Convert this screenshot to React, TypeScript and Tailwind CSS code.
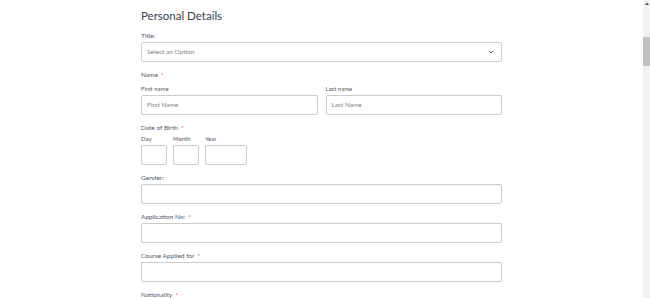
import React from 'react';

function Req() {
  return <span className="ml-[3px] text-[#e0473f]">*</span>;
}

function Label({ children, required }: { children: React.ReactNode; required?: boolean }) {
  return (
    <div className="mt-[8px] text-[6.5px] leading-[10px] text-[#525966]">
      {children}
      {required && <Req />}
    </div>
  );
}

function SubLabel({ children }: { children: React.ReactNode }) {
  return <div className="text-[6px] leading-[10px] text-[#525966]">{children}</div>;
}

function Box({ className = '', children }: { className?: string; children?: React.ReactNode }) {
  return (
    <div
      className={`flex h-[20px] items-center rounded-[2px] border border-[#cbcbcb] bg-white px-[5px] text-[6.5px] text-[#80838a] ${className}`}
    >
      {children}
    </div>
  );
}

// the browser's scrollbar, as it shows in the capture
function ScrollBar() {
  return (
    <div className="flex h-[298px] w-[7px] flex-col bg-[#f1f1f1]">
      <div className="flex h-[7px] items-center justify-center">
        <svg width="4" height="3" viewBox="0 0 4 3">
          <path d="M0 3 L2 0.5 L4 3 Z" fill="#505050" />
        </svg>
      </div>
      <div className="mt-[30px] h-[29px] bg-[#c1c1c1]" />
    </div>
  );
}

export default function App() {
  return (
    <div className="flex h-[298px] w-[650px] overflow-hidden bg-white font-['Lato',sans-serif]">
      <div className="flex-1 pl-[141px] pt-[8px]">
        <div className="w-[361px]">
          <h2 className="text-[11.5px] leading-[15px] text-[#38404e]">Personal Details</h2>

          <div className="mt-[2px]">
            <Label>Title:</Label>
            <Box className="mt-[1px] justify-between">
              <span>Select an Option</span>
              <svg width="6" height="4" viewBox="0 0 6 4" className="mr-[2px]">
                <path d="M0.8 0.8 L3 3 L5.2 0.8" fill="none" stroke="#555" strokeWidth="0.9" />
              </svg>
            </Box>
          </div>

          <Label required>Name</Label>
          <div className="mt-[4px] grid grid-cols-2 gap-[8px]">
            <div>
              <SubLabel>First name</SubLabel>
              <Box className="mt-[1px]">First Name</Box>
            </div>
            <div>
              <SubLabel>Last name</SubLabel>
              <Box className="mt-[1px]">Last Name</Box>
            </div>
          </div>

          <Label required>Date of Birth</Label>
          <div className="mt-[1px] flex gap-[6px]">
            <div className="w-[26px]">
              <SubLabel>Day</SubLabel>
              <Box className="mt-[1px]" />
            </div>
            <div className="w-[26px]">
              <SubLabel>Month</SubLabel>
              <Box className="mt-[1px]" />
            </div>
            <div className="w-[42px]">
              <SubLabel>Year</SubLabel>
              <Box className="mt-[1px]" />
            </div>
          </div>

          <Label>Gender:</Label>
          <Box className="mt-[1px]" />

          <Label required>Application No:</Label>
          <Box className="mt-[1px]" />

          <Label required>Course Applied for</Label>
          <Box className="mt-[1px]" />

          <Label required>Nationality</Label>
          <Box className="mt-[1px]" />
        </div>
      </div>
      <ScrollBar />
    </div>
  );
}
